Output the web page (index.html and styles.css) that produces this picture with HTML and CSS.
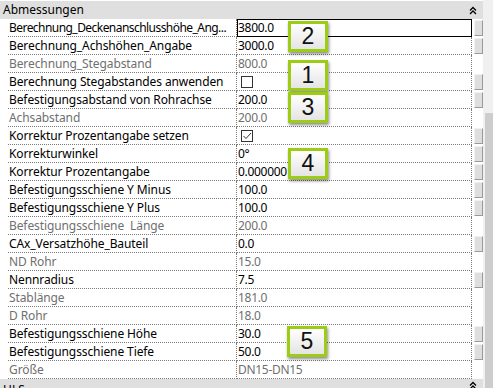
FILE: index.html
```html
<!DOCTYPE html>
<html lang="de">
<head>
	<meta charset="UTF-8">
	<title>Eigenschaften</title>
	<link rel="stylesheet" href="styles.css">
</head>
<body>
	<div class="panel">
		<div class="grid">
			<div class="groupHead">
				<span>Abmessungen</span>
				<svg class="collapse" width="8" height="9" viewBox="0 0 8 9"><polyline points="1,4.5 4,1.5 7,4.5"/><polyline points="1,8 4,5 7,8"/></svg>
			</div>
			<div class="props">
				<div class="row"><span class="label tight">Berechnung_Deckenanschlusshöhe_Ang...</span><span class="value editing">3800.0</span><span class="btnCell"><i class="btn"></i></span></div>
				<div class="row"><span class="label">Berechnung_Achshöhen_Angabe</span><span class="value">3000.0</span><span class="btnCell"><i class="btn"></i></span></div>
				<div class="row off"><span class="label">Berechnung_Stegabstand</span><span class="value">800.0</span><span class="btnCell"></span></div>
				<div class="row"><span class="label">Berechnung Stegabstandes anwenden</span><span class="value"><i class="check"></i></span><span class="btnCell"><i class="btn"></i></span></div>
				<div class="row"><span class="label">Befestigungsabstand von Rohrachse</span><span class="value">200.0</span><span class="btnCell"><i class="btn"></i></span></div>
				<div class="row off"><span class="label">Achsabstand</span><span class="value">200.0</span><span class="btnCell"></span></div>
				<div class="row"><span class="label">Korrektur Prozentangabe setzen</span><span class="value"><i class="check checked"><svg width="10" height="10" viewBox="0 0 10 10"><polyline points="1.5,5 4,7.5 9,2"/></svg></i></span><span class="btnCell"><i class="btn"></i></span></div>
				<div class="row"><span class="label">Korrekturwinkel</span><span class="value">0°</span><span class="btnCell"><i class="btn"></i></span></div>
				<div class="row"><span class="label">Korrektur Prozentangabe</span><span class="value">0.000000</span><span class="btnCell"><i class="btn"></i></span></div>
				<div class="row"><span class="label">Befestigungsschiene Y Minus</span><span class="value">100.0</span><span class="btnCell"><i class="btn"></i></span></div>
				<div class="row"><span class="label">Befestigungsschiene Y Plus</span><span class="value">100.0</span><span class="btnCell"><i class="btn"></i></span></div>
				<div class="row off"><span class="label">Befestigungsschiene&nbsp; Länge</span><span class="value">200.0</span><span class="btnCell"></span></div>
				<div class="row"><span class="label">CAx_Versatzhöhe_Bauteil</span><span class="value">0.0</span><span class="btnCell"><i class="btn"></i></span></div>
				<div class="row off"><span class="label">ND Rohr</span><span class="value">15.0</span><span class="btnCell"></span></div>
				<div class="row"><span class="label">Nennradius</span><span class="value">7.5</span><span class="btnCell"><i class="btn"></i></span></div>
				<div class="row off"><span class="label">Stablänge</span><span class="value">181.0</span><span class="btnCell"></span></div>
				<div class="row off"><span class="label">D Rohr</span><span class="value">18.0</span><span class="btnCell"></span></div>
				<div class="row"><span class="label">Befestigungsschiene Höhe</span><span class="value">30.0</span><span class="btnCell"><i class="btn"></i></span></div>
				<div class="row"><span class="label">Befestigungsschiene Tiefe</span><span class="value">50.0</span><span class="btnCell"><i class="btn"></i></span></div>
				<div class="row off"><span class="label">Größe</span><span class="value">DN15-DN15</span><span class="btnCell"></span></div>
			</div>
			<div class="groupHead last">
				<span>HLS</span>
				<svg class="collapse" width="8" height="9" viewBox="0 0 8 9"><polyline points="1,4.5 4,1.5 7,4.5"/><polyline points="1,8 4,5 7,8"/></svg>
			</div>
		</div>
		<div class="scrollbar"><div class="thumb"></div></div>

		<!-- Markierungen -->
		<div class="callout c2">2</div>
		<div class="callout c1">1</div>
		<div class="callout c3">3</div>
		<div class="callout c4">4</div>
		<div class="callout c5">5</div>
	</div>
</body>
</html>
```

FILE: styles.css
```css
* {
	margin: 0;
	padding: 0;
	box-sizing: border-box;
}
body {
	background: #fff;
	font-family: "Noto Sans", "Open Sans", sans-serif;
	font-size: 12px;
	color: #000;
}
.panel {
	position: relative;
	display: flex;
	width: 493px;
	height: 388px;
	overflow: hidden;
}
.grid {
	width: 483px;
	padding-top: 1px;
}
/* Gruppenkopf */
.groupHead {
	display: flex;
	align-items: center;
	justify-content: space-between;
	height: 18px;
	padding: 0 6px 0 3px;
	background: #dfdfdf;
	line-height: 18px;
}
.groupHead.last {
	align-items: flex-start;
	padding-top: 2px;
}
.collapse polyline {
	fill: none;
	stroke: #000;
	stroke-width: 1.3;
}
/* Eigenschaftszeilen */
.row {
	display: flex;
	height: 18px;
	padding-left: 8px;
	line-height: 17px;
}
.label, .value {
	height: 18px;
	border-bottom: 1px dotted #7a7a7a;
	border-right: 1px dotted #7a7a7a;
	white-space: nowrap;
	overflow: hidden;
}
.label {
	width: 229px;
	padding-left: 1px;
	letter-spacing: -0.1px;
}
.label.tight {
	letter-spacing: -0.55px;
}
.value {
	width: 235px;
	padding-left: 1px;
	letter-spacing: -0.3px;
}
.editing {
	outline: 1px solid #000;
	outline-offset: -1px;
}
.off .label, .off .value {
	color: #6f6f6f;
}
.btnCell {
	width: 11px;
	padding: 1px 0 0 2px;
}
.btn {
	display: block;
	width: 9px;
	height: 16px;
	background: #dedede;
	border: 1px solid;
	border-color: #f2f2f2 #9a9a9a #9a9a9a #f2f2f2;
}
.check {
	display: block;
	width: 12px;
	height: 12px;
	margin: 3px 0 0 3px;
	border: 1px solid #333;
	background: #fff;
}
.check svg {
	display: block;
}
.check polyline {
	fill: none;
	stroke: #333;
	stroke-width: 1;
}
/* Scrollleiste */
.scrollbar {
	width: 10px;
	background: #f0f0f0;
	padding: 113px 0 0 2px;
}
.thumb {
	height: 100%;
	background: #cdcdcd;
}
/* grüne Nummernkästen */
.callout {
	position: absolute;
	width: 40px;
	height: 31px;
	border: 3px solid #9ccc14;
	background: linear-gradient(#fff, #e4e4e4);
	box-shadow: 1px 2px 3px rgba(0, 0, 0, 0.45);
	font-family: "Liberation Sans", Arial, sans-serif;
	font-size: 23px;
	line-height: 25px;
	text-align: center;
	color: #111;
}
.c2 { left: 288px; top: 21px; }
.c1 { left: 288px; top: 60px; }
.c3 { left: 288px; top: 92px; }
.c4 { left: 288px; top: 148px; }
.c5 { left: 287px; top: 326px; }
```
